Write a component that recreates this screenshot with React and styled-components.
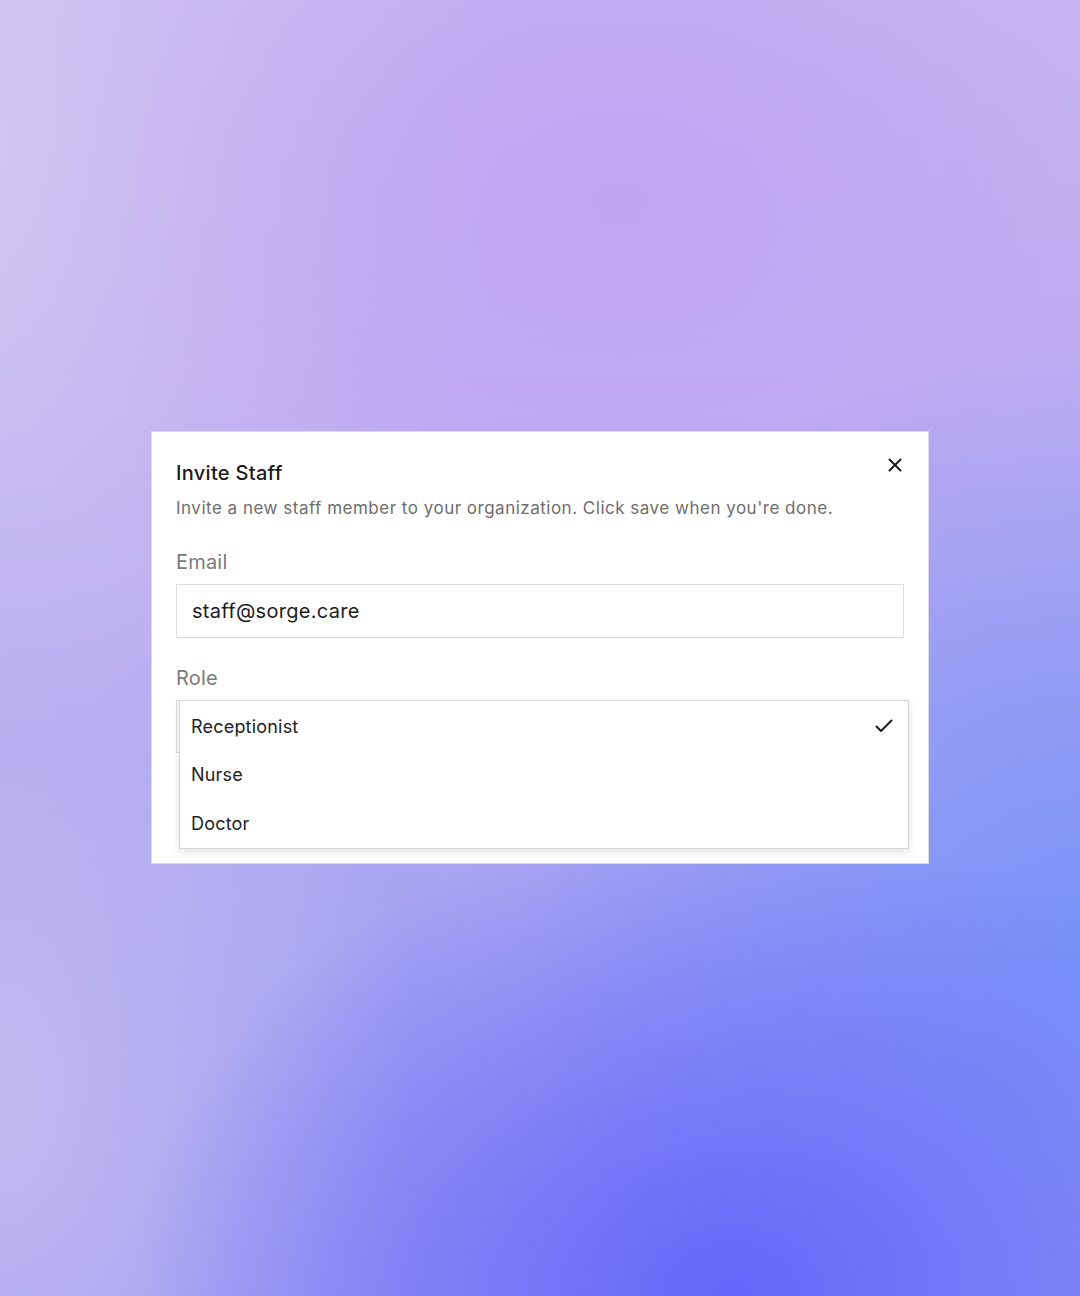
import React from 'react'
import styled, { createGlobalStyle } from 'styled-components'

const GlobalStyle = createGlobalStyle`
  html, body {
    margin: 0;
    padding: 0;
  }
  body {
    font-family: Inter, "Noto Sans", "Liberation Sans", sans-serif;
    -webkit-font-smoothing: antialiased;
  }
`

const roles = ['Receptionist', 'Nurse', 'Doctor']

function CloseIcon() {
  return (
    <svg width="14" height="14" viewBox="0 0 14 14" fill="none">
      <path d="M1.5 1.5l11 11M12.5 1.5l-11 11" stroke="#1c1c1c" strokeWidth="2" strokeLinecap="round" />
    </svg>
  )
}

function CheckIcon() {
  return (
    <svg width="18" height="14" viewBox="0 0 18 14" fill="none">
      <path d="M1.5 7.5l4.5 4.5L16.5 1.5" stroke="#1c1c1c" strokeWidth="2" strokeLinecap="round" strokeLinejoin="round" />
    </svg>
  )
}

function App() {
  return (
    <>
      <GlobalStyle />
      <Page>
        <Dialog>
          <CloseButton aria-label="Close">
            <CloseIcon />
          </CloseButton>
          <Title>Invite Staff</Title>
          <Description>
            Invite a new staff member to your organization. Click save when you're done.
          </Description>

          <Field>
            <Label>Email</Label>
            <Input defaultValue="staff@sorge.care" />
          </Field>

          <Field>
            <Label>Role</Label>
            <SelectWrap>
              <Trigger />
              <Menu>
                {roles.map((role, i) => (
                  <Option key={role}>
                    {role}
                    {i === 0 && <CheckIcon />}
                  </Option>
                ))}
              </Menu>
            </SelectWrap>
          </Field>
        </Dialog>
      </Page>
    </>
  )
}

const Page = styled.div`
  width: 1080px;
  height: 1296px;
  display: flex;
  align-items: center;
  justify-content: center;
  background:
    radial-gradient(ellipse 600px 480px at 730px 1296px, #6466f8 0%, rgba(100, 102, 248, 0) 100%),
    radial-gradient(ellipse 560px 620px at 1080px 960px, rgba(118, 146, 248, 0.95) 0%, rgba(118, 146, 248, 0) 100%),
    radial-gradient(ellipse 420px 700px at 0px 1100px, rgba(196, 186, 240, 0.95) 0%, rgba(196, 186, 240, 0) 100%),
    radial-gradient(ellipse 700px 500px at 620px 200px, rgba(192, 162, 242, 0.9) 0%, rgba(192, 162, 242, 0) 100%),
    radial-gradient(ellipse 500px 600px at 0px 150px, #d2caf1 0%, rgba(210, 202, 241, 0) 100%),
    linear-gradient(180deg, #c8b9f1 0%, #b9aaf0 45%, #a4a2f2 75%, #9a98f3 100%);
`

const Dialog = styled.div`
  position: relative;
  box-sizing: border-box;
  width: 778px;
  height: 433px;
  margin-top: -1px;
  padding: 28px 24px 0;
  background: #ffffff;
  border: 1px solid #dcdcdc;
`

const CloseButton = styled.button`
  position: absolute;
  top: 26px;
  right: 26px;
  display: flex;
  padding: 0;
  border: none;
  background: none;
`

const Title = styled.h2`
  margin: 0;
  font-size: 20px;
  line-height: 26px;
  font-weight: 500;
  letter-spacing: 0.3px;
  color: #1c1c1c;
`

const Description = styled.p`
  margin: 11px 0 0;
  font-size: 17px;
  line-height: 22px;
  letter-spacing: 0.5px;
  color: #6e6e6e;
`

const Field = styled.div`
  display: flex;
  flex-direction: column;
  margin-top: 31px;

  & + & {
    margin-top: 28px;
  }
`

const Label = styled.label`
  font-size: 20px;
  line-height: 24px;
  letter-spacing: 0.2px;
  color: #7a7a7a;
  margin-bottom: 10px;
`

const Input = styled.input`
  box-sizing: border-box;
  width: 728px;
  height: 54px;
  padding: 0 15px;
  border: 1px solid #dcdcdc;
  border-radius: 0;
  font-family: inherit;
  font-size: 20px;
  letter-spacing: 0.3px;
  color: #1c1c1c;
  outline: none;
`

const SelectWrap = styled.div`
  position: relative;
`

const Trigger = styled.div`
  box-sizing: border-box;
  width: 728px;
  height: 53px;
  border: 1px solid #dcdcdc;
`

const Menu = styled.ul`
  position: absolute;
  top: 0;
  left: 3px;
  box-sizing: border-box;
  width: 730px;
  margin: 0;
  padding: 1px 0 0;
  list-style: none;
  background: #ffffff;
  border: 1px solid #d6d6d6;
  box-shadow: 0 3px 8px rgba(0, 0, 0, 0.12);
`

const Option = styled.li`
  display: flex;
  align-items: center;
  justify-content: space-between;
  height: 48.5px;
  padding: 0 15px 0 11px;
  font-size: 18px;
  letter-spacing: 0.2px;
  color: #222222;
`

export default App
